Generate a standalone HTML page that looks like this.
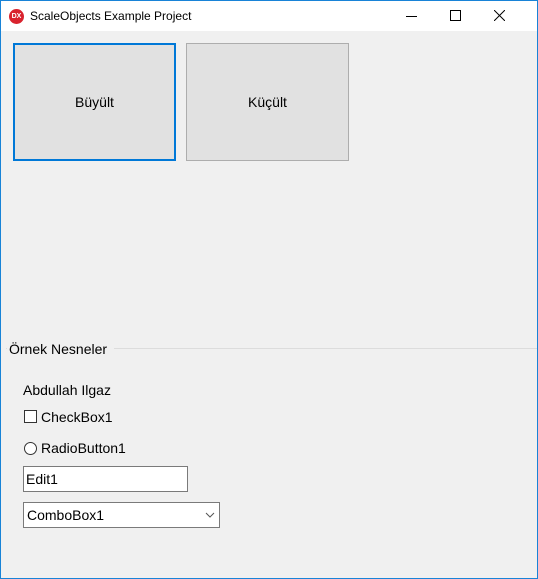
<!DOCTYPE html><html><head><style>
body{margin:0;width:538px;height:579px;overflow:hidden;font-family:"Liberation Sans",sans-serif;}
.win{position:absolute;left:0;top:0;width:536px;height:577px;border:1px solid #1883d7;background:#f0f0f0;}
.title{position:absolute;left:0;top:0;width:536px;height:30px;background:#fff;}
.t{position:absolute;font-size:12px;color:#000;}
.btn{position:absolute;background:#e1e1e1;border:1px solid #adadad;font-size:14px;display:flex;align-items:center;justify-content:center;}
.f{position:absolute;font-size:14px;color:#000;}
</style></head><body><div class="win">
<div class="title">
<div style="position:absolute;left:8px;top:8px;width:15px;height:15px;border-radius:50%;background:#d9232e;color:#fff;font-size:7px;font-weight:bold;text-align:center;line-height:15px">DX</div>
<div class="t" style="left:29px;top:8px">ScaleObjects Example Project</div>
<div style="position:absolute;left:405px;top:15px;width:11px;height:1px;background:#000"></div>
<div style="position:absolute;left:449px;top:9px;width:9px;height:9px;border:1px solid #000"></div>
<svg style="position:absolute;left:493px;top:9px" width="11" height="11"><path d="M0 0L11 11M11 0L0 11" stroke="#000" stroke-width="1"/></svg>
</div>
<div class="btn" style="left:12px;top:42px;width:159px;height:114px;border:2px solid #0078d7">Büyült</div>
<div class="btn" style="left:185px;top:42px;width:161px;height:116px">Küçült</div>
<div style="position:absolute;left:5px;top:347px;width:531px;height:1px;background:#dcdcdc"></div>
<div class="f" style="left:6px;top:340px;background:#f0f0f0;padding:0 7px 0 2px">Örnek Nesneler</div>
<div class="f" style="left:22px;top:381px">Abdullah Ilgaz</div>
<div style="position:absolute;left:23px;top:409px;width:11px;height:11px;border:1px solid #333;background:#fff"></div>
<div class="f" style="left:40px;top:408px">CheckBox1</div>
<div style="position:absolute;left:23px;top:441px;width:11px;height:11px;border:1px solid #333;border-radius:50%;background:#fff"></div>
<div class="f" style="left:40px;top:439px">RadioButton1</div>
<div style="position:absolute;left:22px;top:465px;width:163px;height:24px;border:1px solid #7a7a7a;background:#fff"></div>
<div class="f" style="left:25px;top:470px">Edit1</div>
<div style="position:absolute;left:22px;top:501px;width:195px;height:24px;border:1px solid #7a7a7a;background:#fff"></div>
<div class="f" style="left:26px;top:506px">ComboBox1</div>
<svg style="position:absolute;left:204px;top:511px" width="10" height="6"><path d="M1 1L5 5L9 1" stroke="#555" fill="none"/></svg>
</div></body></html>
